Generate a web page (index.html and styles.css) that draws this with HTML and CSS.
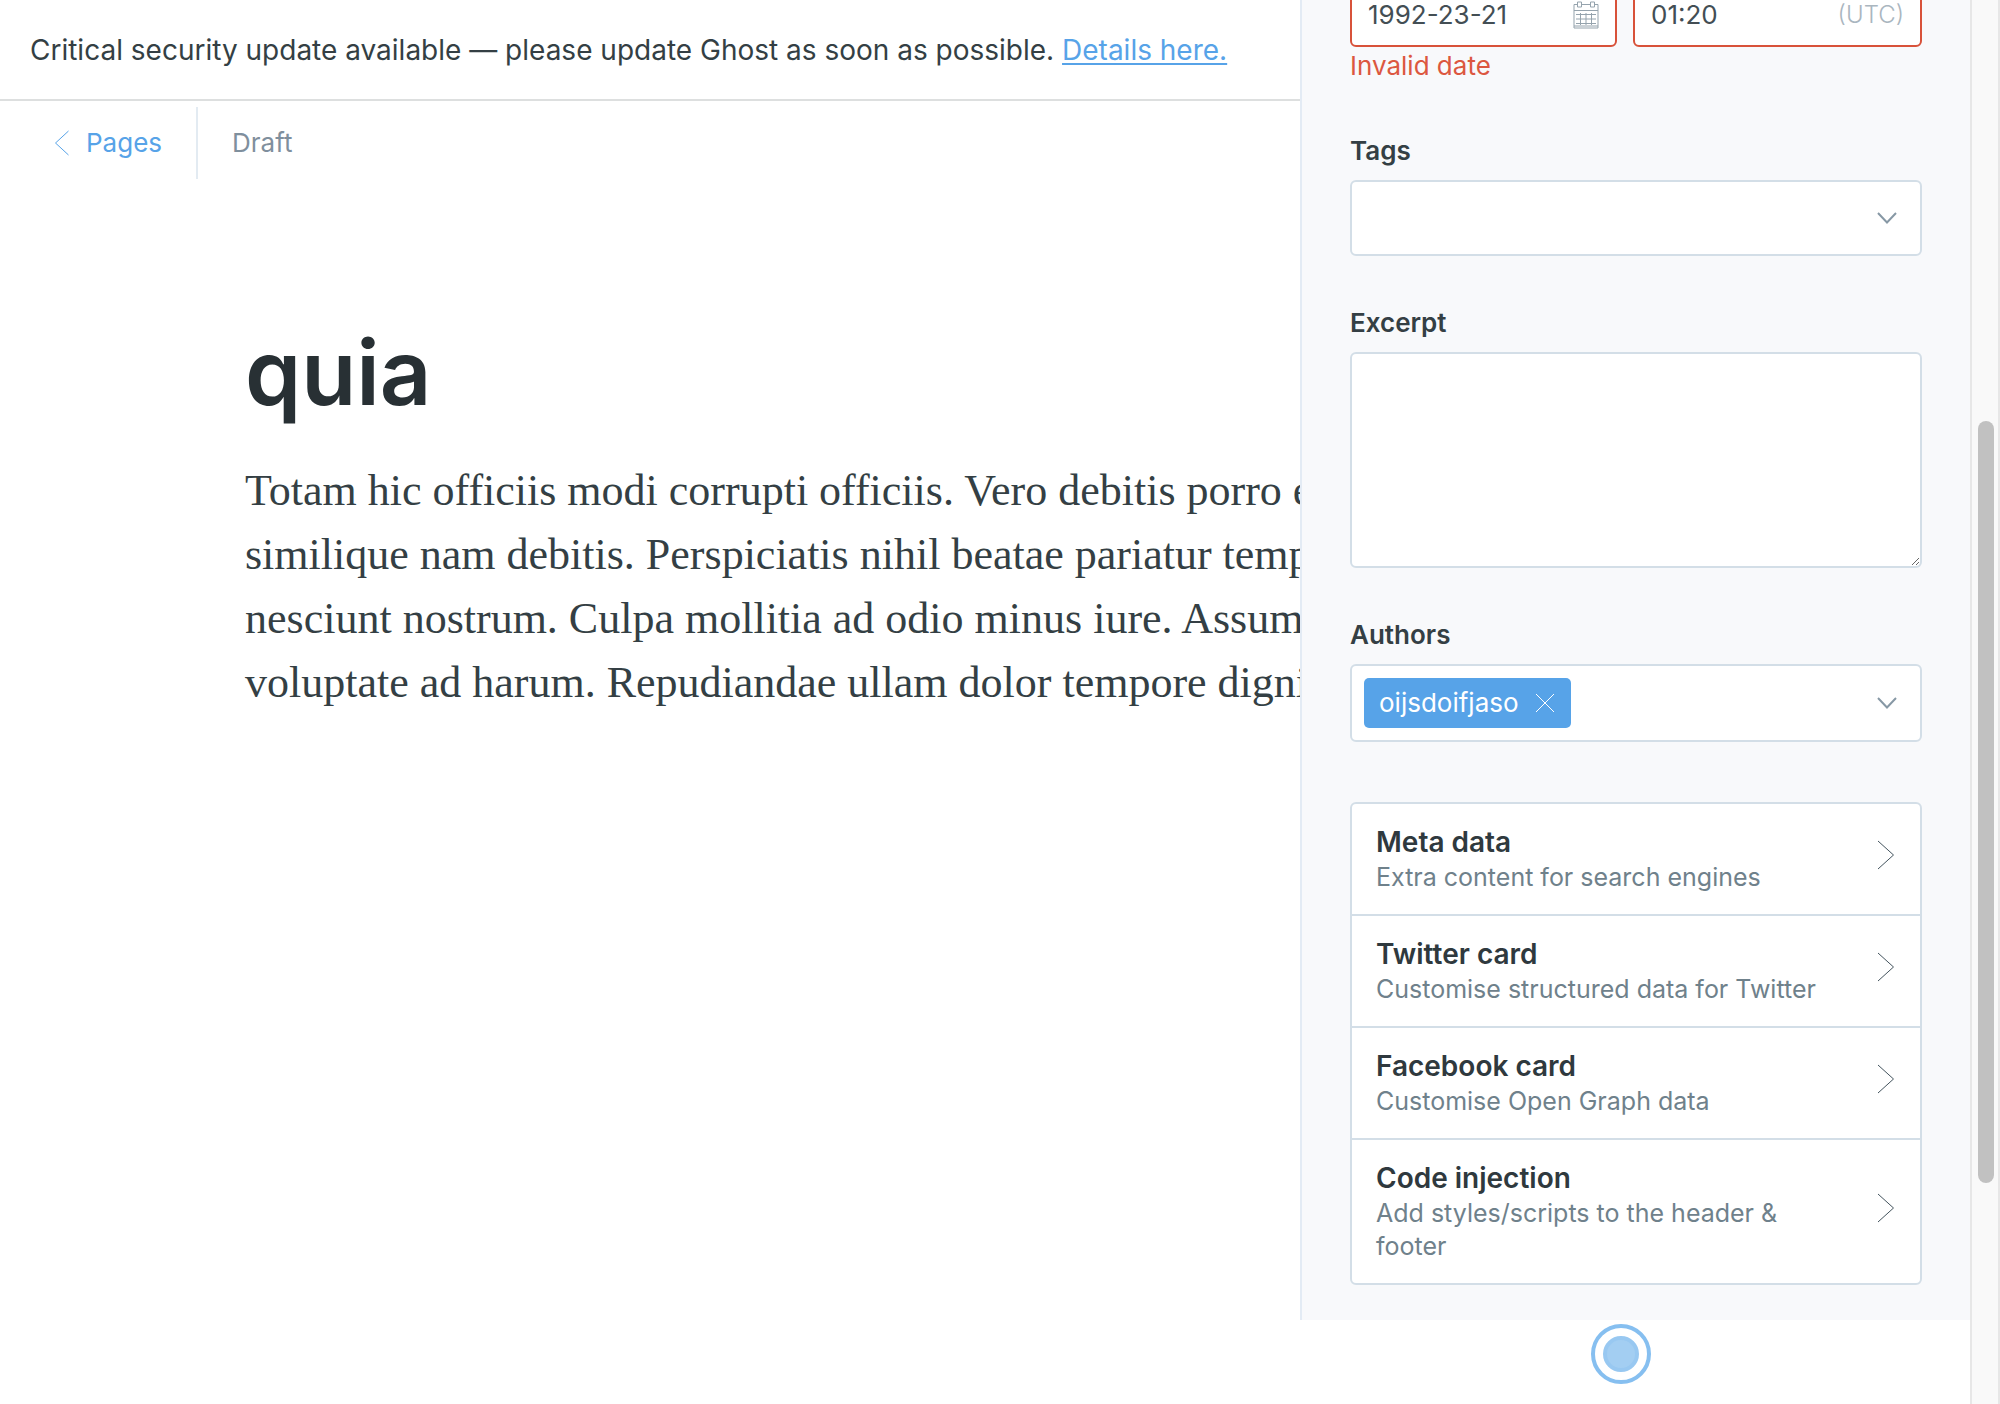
FILE: index.html
```html
<!DOCTYPE html>
<html lang="en">
<head>
<meta charset="utf-8">
<meta name="viewport" content="width=device-width, initial-scale=1">
<title>Ghost Admin - Editor</title>
<link rel="stylesheet" href="styles.css">
</head>
<body>
<div class="app">
  <main class="main">
    <aside class="banner">Critical security update available — please update Ghost as soon as possible. <a href="#details">Details here.</a></aside>
    <header class="editor-header">
      <a class="back" href="#pages">
        <svg width="16" height="26" viewBox="0 0 16 26" aria-hidden="true"><path d="M14.500 1L1.500 13l13 12"/></svg>
        Pages
      </a>
      <span class="status">Draft</span>
    </header>
    <article class="post">
      <h1 class="post-title">quia</h1>
      <p class="post-body">
        <span>Totam hic officiis modi corrupti officiis. Vero debitis porro et</span>
        <span>similique nam debitis. Perspiciatis nihil beatae pariatur tempore</span>
        <span>nesciunt nostrum. Culpa mollitia ad odio minus iure. Assumenda</span>
        <span>voluptate ad harum. Repudiandae ullam dolor tempore digni</span>
      </p>
    </article>
  </main>

  <section class="settings" aria-label="Page settings">
    <div class="date-time">
      <div class="input-wrap date">
        <input type="text" value="1992-23-21" aria-label="Publish date" aria-invalid="true">
        <svg class="calendar" width="26" height="28" viewBox="0 0 26 28" aria-hidden="true"><path d="M4 3.500H1v23.500h24v-23.500h-3M9 3.500h8M1 9.500h24M1 25h24M3 13.500h20M3 18h20M3 22.500h20M7.500 12v12M13 12v12M18.500 12v12M4.500 1h4v5h-4zM17.500 1h4v5h-4z"/></svg>
      </div>
      <div class="input-wrap time">
        <input type="text" value="01:20" aria-label="Publish time" aria-invalid="true">
        <span class="zone">(UTC)</span>
      </div>
    </div>
    <p class="error">Invalid date</p>

    <div class="field">
      <label for="tags">Tags</label>
      <div class="select-wrap">
        <select id="tags"><option></option></select>
        <svg class="arrow" width="20" height="12" viewBox="0 0 20 12" aria-hidden="true"><path d="M1 1l9 9.500L19 1"/></svg>
      </div>
    </div>
    <div class="field">
      <label for="excerpt">Excerpt</label>
      <textarea id="excerpt"></textarea>
    </div>
    <div class="field">
      <label for="authors">Authors</label>
      <div class="tokens">
        <button class="token" type="button">oijsdoifjaso
          <svg width="20" height="20" viewBox="0 0 20 20" aria-hidden="true"><path d="M1 1l18 18M19 1L1 19"/></svg>
        </button>
        <input id="authors" type="text">
        <svg class="arrow" width="20" height="12" viewBox="0 0 20 12" aria-hidden="true"><path d="M1 1l9 9.500L19 1"/></svg>
      </div>
    </div>

    <nav class="links">
      <button type="button"><span class="link-text"><b>Meta data</b><span>Extra content for search engines</span></span>
        <svg width="18" height="30" viewBox="0 0 18 30" aria-hidden="true"><path d="M1 1l15.500 14L1 29"/></svg></button>
      <button type="button"><span class="link-text"><b>Twitter card</b><span>Customise structured data for Twitter</span></span>
        <svg width="18" height="30" viewBox="0 0 18 30" aria-hidden="true"><path d="M1 1l15.500 14L1 29"/></svg></button>
      <button type="button"><span class="link-text"><b>Facebook card</b><span>Customise Open Graph data</span></span>
        <svg width="18" height="30" viewBox="0 0 18 30" aria-hidden="true"><path d="M1 1l15.500 14L1 29"/></svg></button>
      <button type="button"><span class="link-text"><b>Code injection</b><span>Add styles/scripts to the header &amp; footer</span></span>
        <svg width="18" height="30" viewBox="0 0 18 30" aria-hidden="true"><path d="M1 1l15.500 14L1 29"/></svg></button>
    </nav>
  </section>

  <div class="scrollbar" aria-hidden="true"><div class="thumb"></div></div>
  <div class="pointer" aria-hidden="true"></div>
</div>
</body>
</html>
```
FILE: styles.css
```css
*, *::before { box-sizing: border-box; }

body {
  margin: 0;
  background: #fff;
  color: #343f44;
  font-family: Inter, "Liberation Sans", sans-serif;
  font-size: 26px;
  line-height: 32px;
}

button, input, select, textarea { font: inherit; color: inherit; }
svg { flex: none; fill: none; stroke: currentColor; }

.app {
  position: relative;
  display: grid;
  grid-template-columns: minmax(0, 1fr) 670px 30px;
  height: 100vh;
  overflow: hidden;
}

/* Editor */
.main { overflow: hidden; }

.banner {
  padding: 32px 30px 31px;
  border-bottom: 2px solid #dddfdf;
  font-size: 28px;
  line-height: 36px;
  white-space: nowrap;
}
.banner a {
  color: #57a3e8;
  text-decoration-thickness: 2px;
  text-underline-offset: 3px;
}

.editor-header {
  display: flex;
  align-items: center;
  padding: 6px 0 0 54px;
}
.back {
  display: flex;
  align-items: center;
  gap: 16px;
  height: 72px;
  padding-right: 34px;
  border-right: 2px solid #e3ebf2;
  color: #57a3e8;
  text-decoration: none;
}
.status { padding-left: 34px; color: #7f8f9d; }

.post { padding: 138px 0 0 245px; }
.post-title {
  margin: 0;
  color: #283034;
  font-size: 90px;
  font-weight: 600;
  line-height: 112px;
}
.post-body {
  margin: 30px 0 0;
  font-family: "Liberation Serif", serif;
  font-size: 44px;
  line-height: 64px;
  white-space: nowrap;
}
.post-body span { display: block; }

/* Settings panel, scrolled to its end */
.settings {
  display: flex;
  flex-direction: column;
  justify-content: flex-end;
  height: calc(100vh - 84px);
  overflow: hidden;
  padding: 0 48px 35px;
  border-left: 2px solid #e3ebf4;
  background: #f8f9fb;
}
.settings > * { flex: none; }

.date-time { display: grid; grid-template-columns: 267px minmax(0, 1fr); gap: 16px; }
.input-wrap {
  display: flex;
  align-items: center;
  height: 64px;
  padding: 0 16px;
  border: 2px solid #d8523a;
  border-radius: 6px;
  background: #fff;
  color: #434e54;
}
.input-wrap input {
  flex: 1;
  min-width: 0;
  padding: 0;
  border: 0;
  background: none;
  outline: 0;
}
.calendar { color: #95a3ad; }
.zone { color: #aab6bf; font-size: 24px; font-weight: 300; }

.error { margin: 3px 0 2px; color: #dc5740; }

.field { display: flex; flex-direction: column; gap: 13px; margin-top: 51px; }
.field label { font-weight: 600; }

.select-wrap, .tokens, textarea, .links {
  border: 2px solid #d3dee7;
  border-radius: 6px;
  background: #fff;
}
.select-wrap { display: grid; height: 76px; align-items: center; }
.select-wrap select {
  grid-area: 1 / 1;
  width: 100%;
  height: 100%;
  border: 0;
  background: none;
  appearance: none;
}
.select-wrap .arrow { grid-area: 1 / 1; justify-self: end; margin-right: 23px; pointer-events: none; }
.arrow { color: #8798a5; stroke-width: 2; }

textarea { display: block; width: 100%; height: 216px; padding: 12px 16px; resize: vertical; }

.tokens { display: flex; align-items: center; height: 78px; padding: 0 23px 0 12px; }
.tokens input { flex: 1; min-width: 0; border: 0; outline: 0; }
.token {
  display: flex;
  align-items: center;
  gap: 16px;
  height: 50px;
  padding: 0 16px 0 15px;
  border: 0;
  border-radius: 5px;
  background: #57a3e8;
  color: #fff;
}
.token svg { stroke-width: 1; }

.links { margin-top: 60px; }
.links button {
  display: flex;
  align-items: center;
  justify-content: space-between;
  gap: 60px;
  width: 100%;
  padding: 20px 25px 20px 24px;
  border: 0;
  background: none;
  text-align: left;
}
.links button + button { border-top: 2px solid #d3dee7; }
.links svg { margin-bottom: 8px; color: #44545e; stroke-width: 1; }
.link-text { display: flex; flex-direction: column; color: #6f818b; font-size: 25px; line-height: 33px; }
.link-text b { color: #2f393e; font-size: 28px; font-weight: 600; line-height: 37px; }

/* Window scrollbar */
.scrollbar {
  display: grid;
  grid-template-rows: 421fr 762fr 221fr;
  padding: 0 4px 0 6px;
  border: solid #e7e7e7;
  border-width: 0 2px;
  background: #f9f9f9;
}
.thumb { grid-row: 2; border-radius: 8px; background: #c1c1c1; }

/* Mouse pointer highlight */
.pointer {
  position: absolute;
  right: 349px;
  bottom: 20px;
  width: 60px;
  height: 60px;
  padding: 8px;
  border: 4px solid #86bff0;
  border-radius: 50%;
  background: #fff;
}
.pointer::before {
  content: "";
  display: block;
  height: 36px;
  border: 4px solid #98c8f1;
  border-radius: 50%;
  background: #a3cef2;
}
```
